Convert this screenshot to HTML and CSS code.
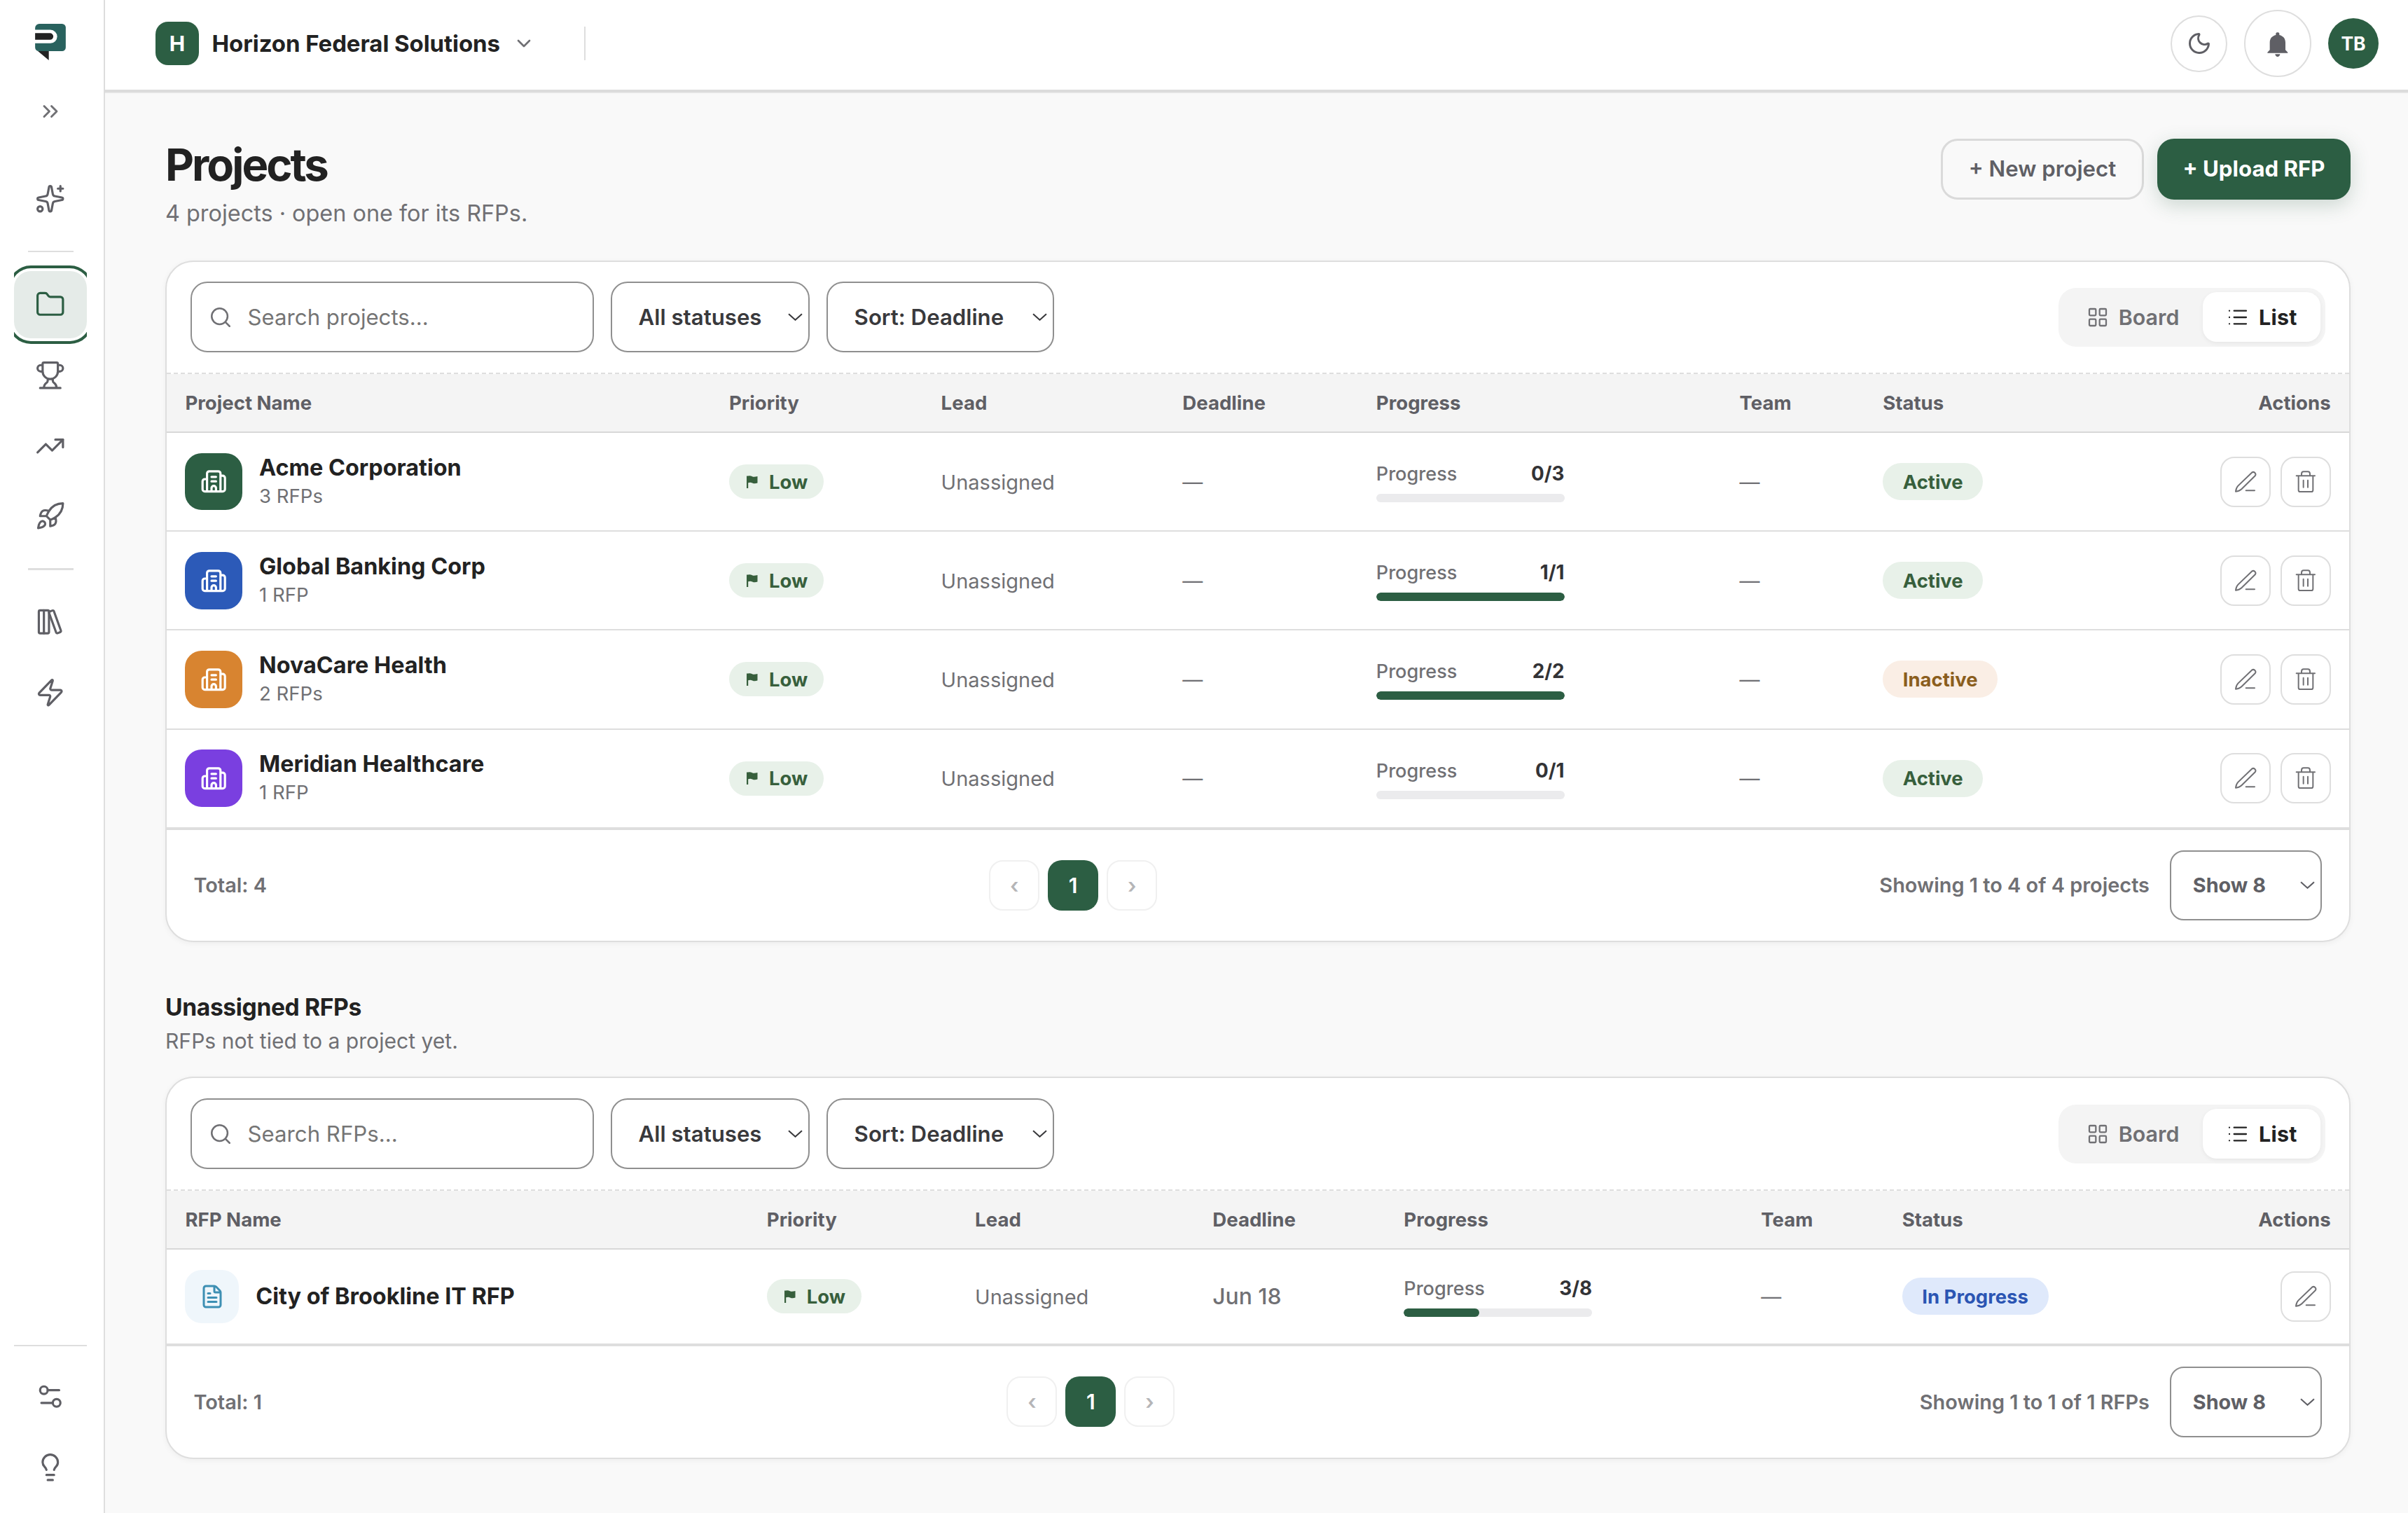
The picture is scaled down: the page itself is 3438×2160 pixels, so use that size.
FILE: index.html
```html
<!DOCTYPE html>
<html lang="en">
<head>
<meta charset="utf-8">
<title>Projects</title>
<link rel="stylesheet" href="styles.css">
</head>
<body>
<svg class="sprite" aria-hidden="true">
  <symbol id="i-building" viewBox="0 0 24 24"><path d="M10 12h4M10 8h4M14 21v-3a2 2 0 0 0-4 0v3M6 10H4a2 2 0 0 0-2 2v7a2 2 0 0 0 2 2h16a2 2 0 0 0 2-2V9a2 2 0 0 0-2-2h-2M6 21V5a2 2 0 0 1 2-2h8a2 2 0 0 1 2 2v16"/></symbol>
  <symbol id="i-pencil" viewBox="0 0 96 96"><path d="M75 8a10 10 0 0 1 14 14L31 79C24 86 15 88 6 89C7 80 9 72 16 65ZM50 85H87"/></symbol>
  <symbol id="i-trash" viewBox="0 0 96 96"><path d="M8 22H87M30 22V14c0-6 3-10 9-10h18c6 0 9 4 9 10v8M17 22v61a7 7 0 0 0 7 7h48a7 7 0 0 0 7-7V22M38 41v30M57 41v30"/></symbol>
  <symbol id="i-search" viewBox="0 0 24 24"><path d="m21 21-4.34-4.34"/><circle cx="11" cy="11" r="8"/></symbol>
  <symbol id="i-chevron" viewBox="0 0 20 10"><path d="M1 1l9 8 9-8"/></symbol>
  <symbol id="i-flag" viewBox="0 0 16 18"><path d="M0 0.5H2.2C4.5 -0.3 6.2 0.4 8 1.2S12 1.8 15.5 1V10.6C12.5 11.6 10.4 11.5 8 10.4S4.5 9.6 2.2 10.2V18H0Z"/></symbol>
  <symbol id="i-board" viewBox="0 0 24 24"><rect width="7" height="7" x="3" y="3" rx="1"/><rect width="7" height="7" x="14" y="3" rx="1"/><rect width="7" height="7" x="14" y="14" rx="1"/><rect width="7" height="7" x="3" y="14" rx="1"/></symbol>
  <symbol id="i-list" viewBox="0 0 24 24"><path d="M3 5h.01M3 12h.01M3 19h.01M8 5h13M8 12h13M8 19h13"/></symbol>
</svg>

<div class="app">
  <aside class="sidebar">
    <svg class="logo" viewBox="0 0 132 157">
      <path fill="#29625e" d="M18 0H116a16 16 0 0 1 16 16V102a16 16 0 0 1-16 16H16A16 16 0 0 1 0 102V18A18 18 0 0 1 18 0Z"/>
      <path fill="#fff" d="M-1 26H66a29 29 0 0 1 0 58H-1Z"/>
      <path fill="#222" d="M0 40H64a14.500 14.500 0 0 1 0 29H0ZM12 118H59V157Z"/>
    </svg>
    <svg class="icon expand" viewBox="0 0 24 24"><path d="m6 17 5-5-5-5M13 17l5-5-5-5"/></svg>
    <nav class="nav nav-main">
      <a class="nav-item"><svg class="icon nav-icon" viewBox="0 0 24 24"><path d="M11.017 2.814a1 1 0 0 1 1.966 0l1.051 5.558a2 2 0 0 0 1.594 1.594l5.558 1.051a1 1 0 0 1 0 1.966l-5.558 1.051a2 2 0 0 0-1.594 1.594l-1.051 5.558a1 1 0 0 1-1.966 0l-1.051-5.558a2 2 0 0 0-1.594-1.594l-5.558-1.051a1 1 0 0 1 0-1.966l5.558-1.051a2 2 0 0 0 1.594-1.594zM20 2v4M22 4h-4"/><circle cx="4" cy="20" r="2"/></svg></a>
      <span class="nav-rule"></span>
      <a class="nav-item active"><svg class="icon nav-icon" viewBox="0 0 24 24"><path d="M20 20a2 2 0 0 0 2-2V8a2 2 0 0 0-2-2h-7.900a2 2 0 0 1-1.690-.9L9.600 3.900A2 2 0 0 0 7.930 3H4a2 2 0 0 0-2 2v13a2 2 0 0 0 2 2Z"/></svg></a>
      <a class="nav-item"><svg class="icon nav-icon" viewBox="0 0 24 24"><path d="M10 14.660v1.626a2 2 0 0 1-.976 1.696A5 5 0 0 0 7 21.978M14 14.660v1.626a2 2 0 0 0 .976 1.696A5 5 0 0 1 17 21.978M18 9h1.500a1 1 0 0 0 0-5H18M4 22h16M6 9a6 6 0 0 0 12 0V3a1 1 0 0 0-1-1H7a1 1 0 0 0-1 1zM6 9H4.500a1 1 0 0 1 0-5H6"/></svg></a>
      <a class="nav-item"><svg class="icon nav-icon" viewBox="0 0 24 24"><path d="M16 7h6v6"/><path d="m22 7-8.500 8.500-5-5L2 17"/></svg></a>
      <a class="nav-item"><svg class="icon nav-icon" viewBox="0 0 24 24"><path d="M4.500 16.500c-1.500 1.260-2 5-2 5s3.740-.5 5-2c.71-.84.7-2.130-.09-2.910a2.180 2.180 0 0 0-2.910-.09zM12 15l-3-3a22 22 0 0 1 2-3.950A12.880 12.880 0 0 1 22 2c0 2.720-.78 7.500-6 11a22.350 22.350 0 0 1-4 2zM9 12H4s.55-3.030 2-4c1.620-1.080 5 0 5 0M12 15v5s3.030-.55 4-2c1.080-1.620 0-5 0-5"/></svg></a>
      <span class="nav-rule"></span>
      <a class="nav-item"><svg class="icon nav-icon" viewBox="0 0 24 24"><rect width="8" height="18" x="3" y="3" rx="1"/><path d="M7 3v18M20.400 18.900c.2.5-.1 1.100-.6 1.300l-1.900.7c-.5.2-1.100-.1-1.300-.6L11.100 5.100c-.2-.5.1-1.100.6-1.300l1.900-.7c.5-.2 1.100.1 1.300.6Z"/></svg></a>
      <a class="nav-item"><svg class="icon nav-icon" viewBox="0 0 24 24"><path d="M4 14a1 1 0 0 1-.78-1.630l9.900-10.200a.5.5 0 0 1 .86.46l-1.920 6.020A1 1 0 0 0 13 10h7a1 1 0 0 1 .78 1.630l-9.900 10.200a.5.5 0 0 1-.86-.46l1.920-6.020A1 1 0 0 0 11 14z"/></svg></a>
    </nav>
    <nav class="nav nav-foot">
      <a class="nav-item"><svg class="icon nav-icon" viewBox="0 0 24 24"><path d="M14 17H5M19 7h-9"/><circle cx="17" cy="17" r="3"/><circle cx="7" cy="7" r="3"/></svg></a>
      <a class="nav-item"><svg class="icon nav-icon" viewBox="0 0 24 24"><path d="M15 14c.2-1 .7-1.700 1.500-2.500 1-.9 1.500-2.200 1.500-3.500A6 6 0 0 0 6 8c0 1 .2 2.200 1.500 3.500.7.700 1.300 1.500 1.500 2.500M9 18h6M10 22h4"/></svg></a>
    </nav>
  </aside>

  <div class="main">
    <header class="topbar">
      <span class="org-badge">H</span>
      <span class="org-name">Horizon Federal Solutions</span>
      <svg class="icon org-chevron" viewBox="0 0 24 24"><path d="m6 9 6 6 6-6"/></svg>
      <span class="topbar-rule"></span>
      <div class="topbar-actions">
        <button class="round moon"><svg class="icon" viewBox="0 0 24 24"><path d="M20.985 12.486a9 9 0 1 1-9.473-9.472c.405-.022.617.46.402.803a6 6 0 0 0 8.268 8.268c.344-.215.825-.004.803.401"/></svg></button>
        <button class="round bell"><svg viewBox="0 0 96 104"><path d="M40 10c0-4 3-6 7.500-6s7.500 2 7.500 6v5c16 4 26 14 26 32v32l10 10v3H4v-3l10-10V47c0-18 10-28 26-32zM37 97h21c0 6-5 11-10.500 11S37 103 37 97z"/></svg></button>
        <span class="avatar">TB</span>
      </div>
    </header>

    <main class="content">
      <div class="page-head">
        <div>
          <h1>Projects</h1>
          <p class="lede">4 projects · open one for its RFPs.</p>
        </div>
        <div class="page-actions">
          <button class="btn btn-outline">+ New project</button>
          <button class="btn btn-primary">+ Upload RFP</button>
        </div>
      </div>

      <section class="card">
        <div class="toolbar">
          <div class="search"><svg class="icon"><use href="#i-search"/></svg><span>Search projects...</span></div>
          <div class="select select-status">All statuses<svg class="icon"><use href="#i-chevron"/></svg></div>
          <div class="select select-sort">Sort: Deadline<svg class="icon"><use href="#i-chevron"/></svg></div>
          <div class="toggle">
            <span class="toggle-item"><svg class="icon"><use href="#i-board"/></svg>Board</span>
            <span class="toggle-item on"><svg class="icon"><use href="#i-list"/></svg>List</span>
          </div>
        </div>
        <table class="projects">
          <thead><tr><th class="c-name">Project Name</th><th class="c-priority">Priority</th><th class="c-lead">Lead</th><th class="c-deadline">Deadline</th><th class="c-progress">Progress</th><th class="c-team">Team</th><th class="c-status">Status</th><th class="c-actions">Actions</th></tr></thead>
          <tbody>
            <tr>
              <td><div class="name"><span class="tile green"><svg class="icon"><use href="#i-building"/></svg></span><div><div class="title">Acme Corporation</div><div class="sub">3 RFPs</div></div></div></td>
              <td><span class="priority"><svg><use href="#i-flag"/></svg>Low</span></td>
              <td class="muted">Unassigned</td><td class="muted">—</td>
              <td><div class="progress"><div class="progress-text"><span>Progress</span><b>0/3</b></div><div class="bar"><i style="width:0%"></i></div></div></td>
              <td class="muted">—</td>
              <td><span class="status active">Active</span></td>
              <td><div class="actions"><button class="act"><svg class="icon"><use href="#i-pencil"/></svg></button><button class="act"><svg class="icon"><use href="#i-trash"/></svg></button></div></td>
            </tr>
            <tr>
              <td><div class="name"><span class="tile blue"><svg class="icon"><use href="#i-building"/></svg></span><div><div class="title">Global Banking Corp</div><div class="sub">1 RFP</div></div></div></td>
              <td><span class="priority"><svg><use href="#i-flag"/></svg>Low</span></td>
              <td class="muted">Unassigned</td><td class="muted">—</td>
              <td><div class="progress"><div class="progress-text"><span>Progress</span><b>1/1</b></div><div class="bar"><i style="width:100%"></i></div></div></td>
              <td class="muted">—</td>
              <td><span class="status active">Active</span></td>
              <td><div class="actions"><button class="act"><svg class="icon"><use href="#i-pencil"/></svg></button><button class="act"><svg class="icon"><use href="#i-trash"/></svg></button></div></td>
            </tr>
            <tr>
              <td><div class="name"><span class="tile orange"><svg class="icon"><use href="#i-building"/></svg></span><div><div class="title">NovaCare Health</div><div class="sub">2 RFPs</div></div></div></td>
              <td><span class="priority"><svg><use href="#i-flag"/></svg>Low</span></td>
              <td class="muted">Unassigned</td><td class="muted">—</td>
              <td><div class="progress"><div class="progress-text"><span>Progress</span><b>2/2</b></div><div class="bar"><i style="width:100%"></i></div></div></td>
              <td class="muted">—</td>
              <td><span class="status inactive">Inactive</span></td>
              <td><div class="actions"><button class="act"><svg class="icon"><use href="#i-pencil"/></svg></button><button class="act"><svg class="icon"><use href="#i-trash"/></svg></button></div></td>
            </tr>
            <tr>
              <td><div class="name"><span class="tile purple"><svg class="icon"><use href="#i-building"/></svg></span><div><div class="title">Meridian Healthcare</div><div class="sub">1 RFP</div></div></div></td>
              <td><span class="priority"><svg><use href="#i-flag"/></svg>Low</span></td>
              <td class="muted">Unassigned</td><td class="muted">—</td>
              <td><div class="progress"><div class="progress-text"><span>Progress</span><b>0/1</b></div><div class="bar"><i style="width:0%"></i></div></div></td>
              <td class="muted">—</td>
              <td><span class="status active">Active</span></td>
              <td><div class="actions"><button class="act"><svg class="icon"><use href="#i-pencil"/></svg></button><button class="act"><svg class="icon"><use href="#i-trash"/></svg></button></div></td>
            </tr>
          </tbody>
        </table>
        <div class="card-foot">
          <span>Total: 4</span>
          <div class="pager"><span class="page off">‹</span><span class="page on">1</span><span class="page off">›</span></div>
          <div class="foot-right"><span>Showing 1 to 4 of 4 projects</span><div class="select select-show">Show 8<svg class="icon"><use href="#i-chevron"/></svg></div></div>
        </div>
      </section>

      <div class="section-head">
        <h2>Unassigned RFPs</h2>
        <p>RFPs not tied to a project yet.</p>
      </div>

      <section class="card">
        <div class="toolbar">
          <div class="search"><svg class="icon"><use href="#i-search"/></svg><span>Search RFPs...</span></div>
          <div class="select select-status">All statuses<svg class="icon"><use href="#i-chevron"/></svg></div>
          <div class="select select-sort">Sort: Deadline<svg class="icon"><use href="#i-chevron"/></svg></div>
          <div class="toggle">
            <span class="toggle-item"><svg class="icon"><use href="#i-board"/></svg>Board</span>
            <span class="toggle-item on"><svg class="icon"><use href="#i-list"/></svg>List</span>
          </div>
        </div>
        <table class="rfps">
          <thead><tr><th class="c-name">RFP Name</th><th class="c-priority">Priority</th><th class="c-lead">Lead</th><th class="c-deadline">Deadline</th><th class="c-progress">Progress</th><th class="c-team">Team</th><th class="c-status">Status</th><th class="c-actions">Actions</th></tr></thead>
          <tbody>
            <tr>
              <td><div class="name"><span class="tile doc"><svg class="icon" viewBox="0 0 24 24"><path d="M6 22a2 2 0 0 1-2-2V4a2 2 0 0 1 2-2h8a2.400 2.400 0 0 1 1.704.706l3.588 3.588A2.400 2.400 0 0 1 20 8v12a2 2 0 0 1-2 2zM14 2v5a1 1 0 0 0 1 1h5M10 9H8M16 13H8M16 17H8"/></svg></span><div class="title">City of Brookline IT RFP</div></div></td>
              <td><span class="priority"><svg><use href="#i-flag"/></svg>Low</span></td>
              <td class="muted">Unassigned</td><td class="date">Jun 18</td>
              <td><div class="progress"><div class="progress-text"><span>Progress</span><b>3/8</b></div><div class="bar"><i style="width:40%"></i></div></div></td>
              <td class="muted">—</td>
              <td><span class="status working">In Progress</span></td>
              <td><div class="actions"><button class="act"><svg class="icon"><use href="#i-pencil"/></svg></button></div></td>
            </tr>
          </tbody>
        </table>
        <div class="card-foot">
          <span>Total: 1</span>
          <div class="pager"><span class="page off">‹</span><span class="page on">1</span><span class="page off">›</span></div>
          <div class="foot-right"><span>Showing 1 to 1 of 1 RFPs</span><div class="select select-show">Show 8<svg class="icon"><use href="#i-chevron"/></svg></div></div>
        </div>
      </section>
    </main>
  </div>
</div>
</body>
</html>
```
FILE: styles.css
```css
:root {
  --green: #2c5e43;
  --ink: #222;
  --text: #5f5f65;
  --muted: #707074;
  --line: #dedede;
}
* { box-sizing: border-box; }
body { margin: 0; background: #f9f9f9; color: var(--ink); font-family: "Inter", sans-serif; }
h1, h2, p { margin: 0; }
button { font: inherit; padding: 0; background: none; border: 0; }
.sprite { display: none; }
.icon { display: block; flex: none; fill: none; stroke: currentColor; stroke-width: 2; stroke-linecap: round; stroke-linejoin: round; }

.app { display: flex; height: 2160px; overflow: hidden; }

/* Sidebar */
.sidebar { flex: none; width: 150px; padding: 34px 24px 17px 20px; display: flex; flex-direction: column; background: #fff; border-right: 2px solid var(--line); color: var(--text); }
.logo { display: block; width: 44px; height: 52px; margin-left: 30px; }
.expand { width: 36px; height: 36px; margin: 55px auto 0; color: var(--muted); stroke-width: 1.9; }
.nav { display: flex; flex-direction: column; align-items: center; gap: 4.8px; }
.nav-main { margin-top: 58.500px; overflow-x: clip; }
.nav-foot { margin-top: auto; border-top: 2px solid var(--line); padding-top: 24px; }
.nav-item { width: 104px; height: 96px; border-radius: 24px; display: flex; align-items: center; justify-content: center; }
.nav-item.active { background: #e5ebe8; color: var(--green); box-shadow: 0 0 0 4px #fff, 0 0 0 8px var(--green); }
.nav-icon { width: 43.500px; height: 43.500px; stroke-width: 1.75; }
.nav-rule { width: 65px; height: 2.4px; margin: 21.600px 0; background: var(--line); }

/* Top bar */
.main { flex: 1; min-width: 0; display: flex; flex-direction: column; }
.topbar { flex: none; height: 132px; padding: 0 42px 4px 72px; display: flex; align-items: center; background: #fff; border-bottom: 4px solid #dcdcdc; box-shadow: 0 1px 1px rgba(0,0,0,.05); }
.org-badge { width: 62px; height: 62px; border-radius: 18px; background: var(--green); color: #fff; font-size: 30px; font-weight: 700; display: flex; align-items: center; justify-content: center; }
.org-name { margin-left: 18.500px; font-size: 33px; font-weight: 700; letter-spacing: -.08px; }
.org-chevron { width: 32px; height: 32px; margin-left: 18px; color: var(--muted); }
.topbar-rule { width: 2px; height: 48px; margin-left: 70px; background: var(--line); }
.topbar-actions { margin-left: auto; display: flex; align-items: center; gap: 24px; }
.round { border: 2px solid var(--line); border-radius: 50%; display: flex; align-items: center; justify-content: center; color: var(--text); }
.moon { width: 81px; height: 81px; }
.moon svg { width: 36px; height: 36px; }
.bell { width: 96px; height: 96px; }
.bell svg { width: 32px; height: 34.670px; fill: currentColor; overflow: visible; }
.avatar { width: 72px; height: 72px; border-radius: 50%; background: var(--green); color: #fff; font-size: 26.500px; font-weight: 700; display: flex; align-items: center; justify-content: center; }

/* Page */
.content { padding: 66px 82px 0 86px; }
.page-head { display: flex; justify-content: space-between; align-items: flex-start; margin-bottom: 42.600px; }
h1 { font-size: 63.400px; line-height: 74px; font-weight: 700; letter-spacing: -3px; }
.lede { margin-top: 9px; font-size: 32.400px; line-height: 48px; color: var(--muted); }
.page-actions { display: flex; gap: 19px; }
.btn { height: 87px; padding-bottom: 1px; border-radius: 24px; font-size: 31.200px; font-weight: 600; white-space: nowrap; }
.btn-outline { width: 290px; border: 3px solid #dadada; color: var(--text); }
.btn-primary { width: 276px; background: var(--green); color: #fff; font-weight: 700; box-shadow: 0 8px 28px rgba(44,94,67,.22); }

.card { background: #fff; border: 2px solid var(--line); border-radius: 40px; overflow: hidden; box-shadow: 0 2px 8px rgba(0,0,0,.05); }
.toolbar { display: flex; align-items: center; gap: 24px; padding: 28.800px 34.400px 28.800px 33.600px; border-bottom: 2px dashed var(--line); }
.search { width: 576px; height: 100.800px; padding-left: 24px; display: flex; align-items: center; gap: 22px; border: 2px solid #8f8f8f; border-radius: 24px; font-size: 31.200px; color: #757575; }
.search svg { width: 34px; height: 34px; color: var(--muted); stroke-width: 1.8; }
.select { height: 100.800px; padding: 0 8px 0 38px; display: flex; align-items: center; justify-content: space-between; border: 2px solid #8f8f8f; border-radius: 24px; font-size: 31.200px; font-weight: 600; color: #39393c; }
.select svg { width: 21px; height: 11px; stroke-linecap: butt; stroke-linejoin: miter; }
.select-status { width: 284px; }
.select-sort { width: 325px; }
.select-show { width: 217px; padding-left: 31px; border-radius: 20px; font-size: 28.800px; font-weight: 700; color: var(--text); }
.toggle { margin-left: auto; height: 84px; padding: 6.400px; display: flex; background: #f4f4f4; border-radius: 25px; font-size: 30.400px; font-weight: 600; color: var(--muted); }
.toggle-item { display: flex; align-items: center; gap: 14px; padding: 0 34px; border-radius: 20px; }
.toggle-item.on { padding: 0 33.500px; background: #fff; color: var(--ink); font-weight: 700; box-shadow: 0 2px 6px rgba(0,0,0,.06); letter-spacing: .3px; }
.toggle svg { width: 32px; height: 32px; stroke-width: 1.7; }
.toggle-item:not(.on) { padding-right: 34px; padding-left: 33px; }

/* Tables */
table { width: 100%; table-layout: fixed; border-collapse: separate; border-spacing: 0; }
th { height: 84px; padding: 0 26.400px; background: #f4f4f4; border-bottom: 2px solid #d8d8d8; text-align: left; font-size: 27.600px; font-weight: 700; color: var(--text); }
td { padding: 0 26.400px; border-bottom: 2px solid var(--line); vertical-align: middle; white-space: nowrap; }
.projects td { height: 141.200px; }
.rfps td { height: 136.400px; }
.projects .c-name { width: 776.600px; }
.projects .c-priority { width: 302.600px; }
.projects .c-lead { width: 344.700px; }
.projects .c-deadline { width: 276.500px; }
.projects .c-progress { width: 518.800px; }
.projects .c-team { width: 204.600px; }
.rfps .c-name { width: 830.400px; }
.rfps .c-priority { width: 297.300px; }
.rfps .c-lead { width: 339.200px; }
.rfps .c-deadline { width: 273px; }
.rfps .c-progress { width: 510px; }
.rfps .c-team { width: 201.400px; }
th.c-actions { text-align: right; }
.name { display: flex; align-items: center; gap: 24px; }
.tile { flex: none; width: 81.600px; height: 81.600px; border-radius: 24px; color: #fff; display: flex; align-items: center; justify-content: center; }
.tile svg { width: 38.400px; height: 38.400px; }
.green { background: var(--green); }
.blue { background: #2c5ab8; }
.orange { background: #d88430; }
.purple { background: #7a3fe0; }
.doc { width: 76.800px; height: 76.800px; background: #eff6fb; color: #3d8fb3; }
.doc svg { width: 36px; height: 36px; }
.title { font-size: 32.400px; line-height: 40px; font-weight: 700; }
.sub { font-size: 27.600px; line-height: 40px; color: var(--muted); }
.muted { padding-top: 1px; font-size: 29px; color: var(--muted); }
.date { font-size: 31.800px; font-weight: 500; color: var(--muted); }
.priority { display: inline-flex; align-items: center; vertical-align: middle; gap: 16px; width: 135px; height: 49px; padding-left: 25px; border-radius: 24.500px; background: #e8f1e9; color: #375f3c; font-size: 27.400px; font-weight: 700; }
.priority svg { width: 16px; height: 18px; fill: currentColor; }
.progress { width: 268.800px; }
.progress-text { display: flex; justify-content: space-between; align-items: baseline; height: 34px; margin: 1px 0 12px; line-height: 34px; font-size: 27.100px; font-weight: 500; color: var(--muted); }
.progress-text b { font-size: 27.800px; font-weight: 700; color: #333336; }
.bar { height: 12px; border-radius: 6px; background: #ebebed; overflow: hidden; }
.bar i { display: block; height: 100%; border-radius: 6px; background: var(--green); }
.status { display: inline-flex; align-items: center; vertical-align: middle; height: 53px; padding: 0 28.600px; border-radius: 27px; font-size: 27.500px; font-weight: 700; }
.active.status { background: #e8f1e9; color: #375f3c; }
.inactive { background: #faeee5; color: #8b5e1e; }
.working { background: #dfe9fb; color: #2b55b3; }
.actions { display: flex; justify-content: flex-end; gap: 14px; }
.act { width: 72px; height: 72px; border: 2px solid var(--line); border-radius: 20px; display: flex; align-items: center; justify-content: center; color: var(--muted); }
.act svg { width: 32px; height: 32px; stroke-width: 6; }

/* Card footer */
.card-foot { display: flex; align-items: center; justify-content: space-between; padding: 28.800px 39.200px 28.800px 38.400px; border-top: 2px solid var(--line); font-size: 28.900px; font-weight: 600; color: var(--muted); }
.foot-right { display: flex; align-items: center; gap: 28.800px; }
.pager { display: flex; gap: 12px; }
.page { width: 72px; height: 72px; border-radius: 20px; display: flex; align-items: center; justify-content: center; font-size: 30px; font-weight: 600; }
.page.on { background: var(--green); color: #fff; }
.page.off { border: 2px solid #f0f0f0; color: #b5b5b7; }

.section-head { margin: 70.600px 0 31.700px; }
h2 { font-size: 33.600px; line-height: 44px; font-weight: 700; letter-spacing: -.36px; }
.section-head p { margin-top: 6px; font-size: 30.100px; line-height: 40px; color: var(--muted); }
```
